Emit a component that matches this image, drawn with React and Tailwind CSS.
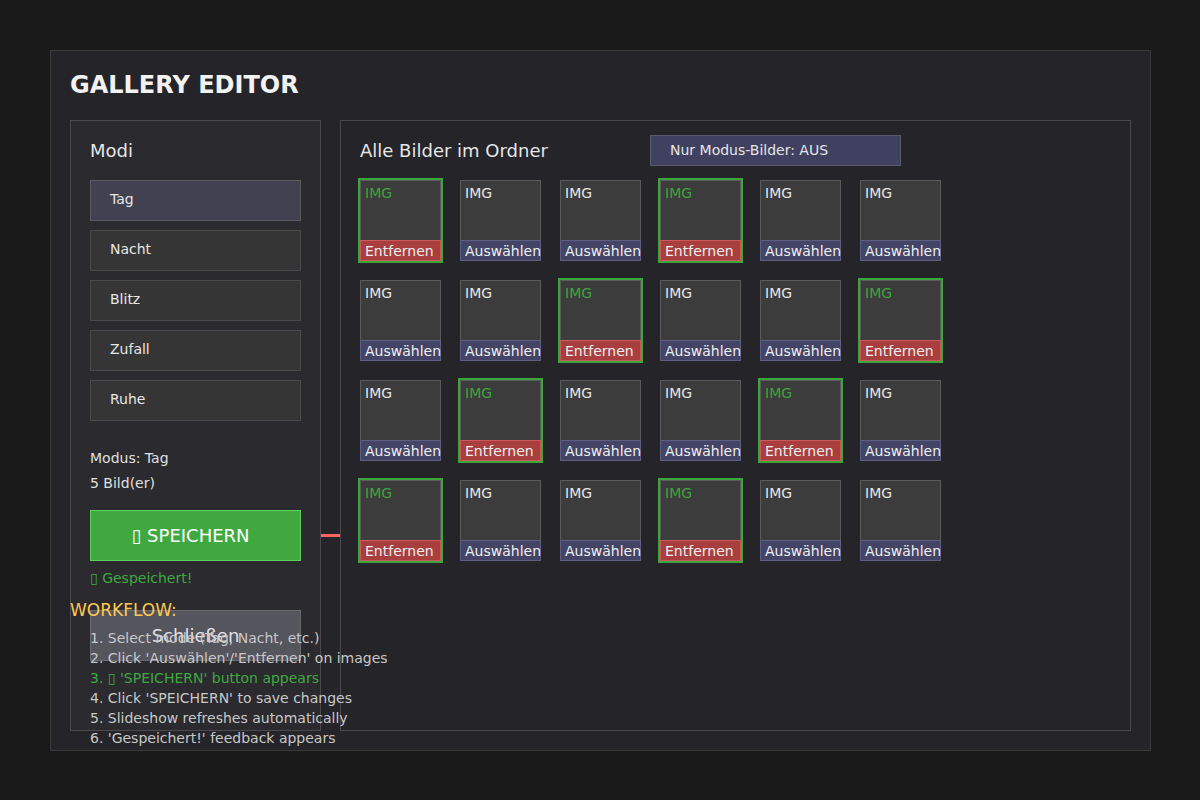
import React from "react";

const selected = [
  [0, 3],
  [2, 5],
  [1, 4],
  [0, 3],
];

function Tile({ sel }) {
  return (
    <div
      className={
        "flex h-[81px] w-[81px] flex-col border border-[#5a5a5a] bg-[#3c3c3c] " +
        (sel ? "ring-2 ring-[#3ca53c]" : "")
      }
    >
      <div
        className={
          "flex-1 pl-[4px] pt-[4px] text-[14px] leading-[17px] " +
          (sel ? "text-[#3ca53c]" : "text-[#e6e6e6]")
        }
      >
        IMG
      </div>
      <div
        className={
          "-mx-px -mb-px h-[21px] whitespace-nowrap border pl-[4px] pt-[2px] text-[14px] leading-[17px] text-[#eeeeee] " +
          (sel
            ? "border-[#cc5a5a] bg-[#a83e3e]"
            : "border-[#5e5e82] bg-[#444466]")
        }
      >
        {sel ? "Entfernen" : "Auswählen"}
      </div>
    </div>
  );
}

function ModeButton({ label, active }) {
  return (
    <div
      className={
        "flex h-[41px] w-[211px] items-center border pb-[3px] pl-[19px] text-[14px] leading-[17px] text-[#e6e6e6] " +
        (active
          ? "border-[#5a5a5e] bg-[#414152]"
          : "border-[#4a4a4a] bg-[#353535]")
      }
    >
      {label}
    </div>
  );
}

export default function App() {
  const rows = [0, 1, 2, 3];
  const cols = [0, 1, 2, 3, 4, 5];
  return (
    <div
      className="min-h-[800px] w-[1200px] bg-[#1a1a1a] pl-[50px] pt-[50px]"
      style={{ fontFamily: '"DejaVu Sans", "Noto Sans", sans-serif' }}
    >
      <div className="relative h-[701px] w-[1101px] border border-[#3a3a3a] bg-[#242429] pl-[19px] pt-[20px]">
        <h1 className="text-[24px] font-bold leading-[28px] text-[#f2f2f2]">
          GALLERY EDITOR
        </h1>
        <div className="mt-[21px] flex">
          {/* left panel */}
          <div className="h-[611px] w-[251px] border border-[#4a4a4e] bg-[#2a2a2f] pl-[19px] pt-[19px]">
            <div className="text-[18px] leading-[21px] text-[#e6e6e6]">Modi</div>
            <div className="mt-[19px] flex flex-col gap-[9px]">
              <ModeButton label="Tag" active />
              <ModeButton label="Nacht" />
              <ModeButton label="Blitz" />
              <ModeButton label="Zufall" />
              <ModeButton label="Ruhe" />
            </div>
            <div className="mt-[29px] text-[14px] leading-[17px] text-[#e0e0e0]">
              Modus: Tag
            </div>
            <div className="mt-[8px] text-[14px] leading-[17px] text-[#e0e0e0]">
              5 Bild(er)
            </div>
            <div className="mt-[18px] flex h-[51px] w-[211px] items-center justify-center border border-[#5fcf5f] bg-[#3fa93f] pr-[10px] text-[18px] leading-[21px] text-white">
              ▯ SPEICHERN
            </div>
            <div className="mt-[9px] text-[14px] leading-[17px] text-[#3fa93f]">
              ▯ Gespeichert!
            </div>
            <div className="mt-[23px] flex h-[51px] w-[211px] items-center justify-center border border-[#6a6a70] bg-[#55555e] text-[18px] leading-[21px] text-[#e0e0e0]">
              Schließen
            </div>
          </div>
          {/* connector */}
          <div className="w-[19px]">
            <div className="mt-[414px] h-[3px] w-[19px] bg-[#ff6464]" />
          </div>
          {/* right panel */}
          <div className="h-[611px] w-[791px] border border-[#4a4a4e] bg-[#242429] pl-[19px] pt-[14px]">
            <div className="flex items-start">
              <div className="mt-[5px] w-[290px] text-[18px] leading-[21px] text-[#e6e6e6]">
                Alle Bilder im Ordner
              </div>
              <div className="flex h-[31px] w-[251px] items-center border border-[#5a5a6a] bg-[#404060] pl-[19px] text-[14px] leading-[17px] text-[#e6e6e6]">
                Nur Modus-Bilder: AUS
              </div>
            </div>
            <div className="mt-[14px] grid grid-cols-[repeat(6,81px)] gap-[19px]">
              {rows.map((r) =>
                cols.map((c) => (
                  <Tile key={r + "-" + c} sel={selected[r].includes(c)} />
                ))
              )}
            </div>
          </div>
        </div>
        {/* workflow overlay */}
        <div className="absolute left-[19px] top-[549px]">
          <div className="text-[17px] leading-[20px] text-[#ffc850]">WORKFLOW:</div>
          <div className="ml-[20px] mt-[8px] whitespace-nowrap text-[14px] leading-[20px] text-[#c8c8c8]">
            <div>1. Select mode (Tag, Nacht, etc.)</div>
            <div>2. Click 'Auswählen'/'Entfernen' on images</div>
            <div className="text-[#3fa93f]">3. ▯ 'SPEICHERN' button appears</div>
            <div>4. Click 'SPEICHERN' to save changes</div>
            <div>5. Slideshow refreshes automatically</div>
            <div>6. 'Gespeichert!' feedback appears</div>
          </div>
        </div>
      </div>
    </div>
  );
}
